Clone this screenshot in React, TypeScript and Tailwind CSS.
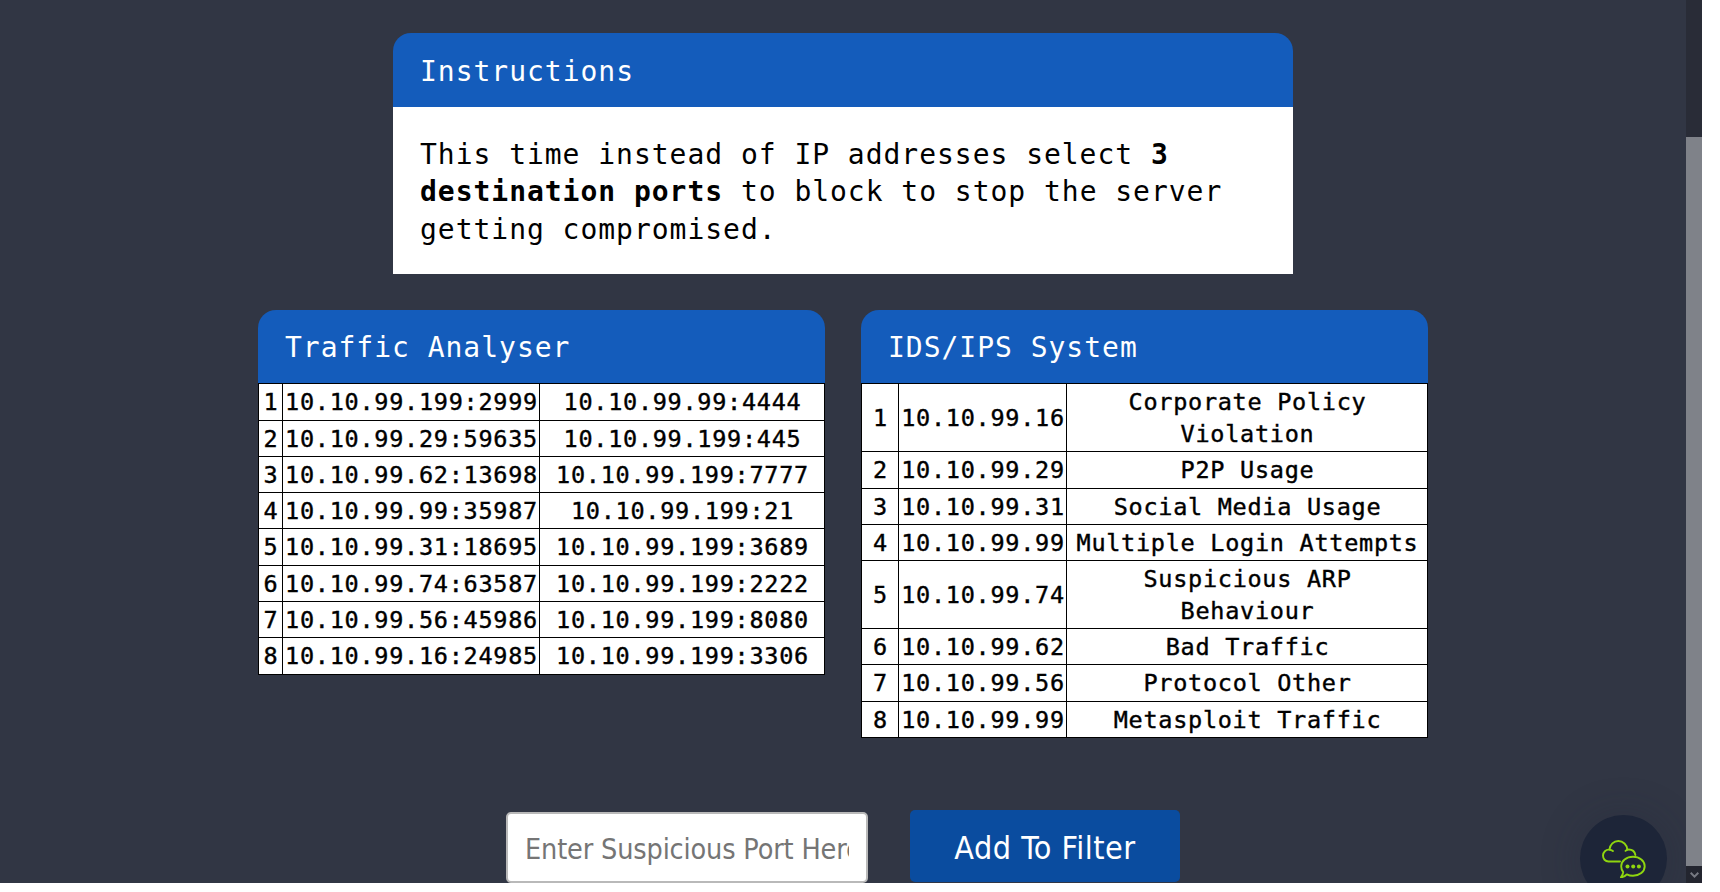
import type { ReactNode } from "react";

const traffic = [
  ["10.10.99.199:2999", "10.10.99.99:4444"],
  ["10.10.99.29:59635", "10.10.99.199:445"],
  ["10.10.99.62:13698", "10.10.99.199:7777"],
  ["10.10.99.99:35987", "10.10.99.199:21"],
  ["10.10.99.31:18695", "10.10.99.199:3689"],
  ["10.10.99.74:63587", "10.10.99.199:2222"],
  ["10.10.99.56:45986", "10.10.99.199:8080"],
  ["10.10.99.16:24985", "10.10.99.199:3306"],
];

const alerts = [
  ["10.10.99.16", "Corporate Policy Violation"],
  ["10.10.99.29", "P2P Usage"],
  ["10.10.99.31", "Social Media Usage"],
  ["10.10.99.99", "Multiple Login Attempts"],
  ["10.10.99.74", "Suspicious ARP Behaviour"],
  ["10.10.99.62", "Bad Traffic"],
  ["10.10.99.56", "Protocol Other"],
  ["10.10.99.99", "Metasploit Traffic"],
];

function CardHeader({ children, className }: { children: ReactNode; className: string }) {
  return (
    <h2
      className={`flex items-center rounded-t-[18px] bg-[#145cbb] pl-[27px] text-[28px] tracking-[0.98px] text-white ${className}`}
    >
      {children}
    </h2>
  );
}

function DataGrid({ rows, className }: { rows: string[][]; className: string }) {
  const cell = "flex items-center justify-center overflow-hidden bg-white pt-0.5";
  return (
    <div
      className={`grid gap-px bg-black p-px text-center text-[23.5px] leading-[31.5px] tracking-[0.72px] text-black [-webkit-text-stroke:0.4px_black] ${className}`}
    >
      {rows.map((row, i) => (
        <div key={i} className="contents">
          <div className={`${cell} pl-px`}>{i + 1}</div>
          <div className={`${cell} pl-px whitespace-nowrap`}>{row[0]}</div>
          <div className={`${cell} pr-1 pl-[5px]`}>{row[1]}</div>
        </div>
      ))}
    </div>
  );
}

function ChatIcon() {
  return (
    <svg width="44" height="38" viewBox="0 0 44 38" fill="none" stroke="#8fd60f" strokeWidth="1.9" strokeLinecap="round" strokeLinejoin="round">
      <path d="M18 21.5H6.5C3.2 21.5 1 18.8 1 15.6c0-3.500 2.900-6.200 6.300-5.900 1.500 0 2.700.5 3.600 1.300" />
      <path d="M7.500 9.300C8 4.500 11.700 1 16.300 1c4.800 0 8.700 3.800 9 8.500" />
      <path d="M23.500 10.800c.8-.8 2-1.300 3.300-1.300 3.500 0 6 2.300 6.600 5.500" />
      <path d="M31 16.800c6.600 0 11.700 4 11.700 9.500s-5.100 9.500-11.700 9.500c-2.300 0-4.400-.5-6.200-1.400-1.500 1.600-3.600 2.700-5.900 2.900 1.300-1.500 2.100-3.200 2.300-5.200-1.300-1.600-2-3.600-2-5.800 0-5.500 5.200-9.500 11.800-9.500Z" />
      <g fill="#8fd60f" stroke="none">
        <circle cx="25.500" cy="26.500" r="2" />
        <circle cx="31.200" cy="26.500" r="2" />
        <circle cx="36.900" cy="26.500" r="2" />
      </g>
    </svg>
  );
}

export default function App() {
  return (
    <div className="h-[892px] w-[1720px] overflow-hidden bg-white">
      <div className="flex h-[883px] w-[1702px] overflow-hidden">
        <main className="relative flex h-[883px] w-[1686px] flex-col items-center overflow-hidden bg-[#313644] pt-[33px] font-['DejaVu_Sans_Mono','Liberation_Mono',monospace]">
          <section className="h-[241px] w-[900px] shrink-0">
            <CardHeader className="h-[74px] pt-1">Instructions</CardHeader>
            <p className="h-[167px] bg-white pt-[28.5px] pl-[27px] text-[28px] leading-[37.5px] tracking-[0.97px] text-black">
              This time instead of IP addresses select <b>3</b>
              <br />
              <b>destination ports</b> to block to stop the server
              <br />
              getting compromised.
            </p>
          </section>

          <div className="mt-9 flex h-[502px] shrink-0 items-start gap-9">
            <section className="w-[567px]">
              <CardHeader className="h-[73px] pt-0.5">Traffic Analyser</CardHeader>
              <DataGrid
                rows={traffic}
                className="grid-cols-[23px_256px_284px] grid-rows-[36px_35px_35px_35px_36px_35px_35px_36px]"
              />
            </section>
            <section className="w-[567px]">
              <CardHeader className="h-[73px] pt-0.5">IDS/IPS System</CardHeader>
              <DataGrid
                rows={alerts}
                className="grid-cols-[36px_167px_360px] grid-rows-[67px_36px_35px_35px_67px_35px_36px_35px]"
              />
            </section>
          </div>

          <form className="flex w-[674px] shrink-0 items-start justify-between font-['DejaVu_Sans_Condensed','DejaVu_Sans',sans-serif] [font-stretch:condensed]">
            <input
              type="text"
              placeholder="Enter Suspicious Port Here"
              className="h-[71px] w-[362px] rounded-[5px] border-2 border-[#b9b9b9] bg-white px-[17px] pt-[3px] text-[28.5px] tracking-[-0.15px] placeholder:text-[#757575]"
            />
            <button type="button" className="-mt-[2px] h-[72px] w-[270px] rounded-[5px] bg-[#0a4c9f] pt-1 text-[32px] tracking-[0.5px] text-white">
              Add To Filter
            </button>
          </form>

          <div className="absolute top-[815px] left-[1580px] flex h-[87px] w-[87px] justify-center rounded-full bg-[#1d2538] pt-[25px] shadow-[0_2px_40px_rgba(29,37,56,0.3)]">
            <ChatIcon />
          </div>
        </main>

        <aside className="flex w-4 flex-col bg-[#292c37]">
          <div className="mt-[137px] h-[729px] bg-[#7f8289]" />
          <div className="flex h-[17px] items-center justify-center bg-[#23252f]">
            <svg width="9" height="6" viewBox="0 0 9 6" fill="none" stroke="#777982" strokeWidth="2">
              <path d="M.7.8 4.500 4.600 8.300.8" />
            </svg>
          </div>
        </aside>
      </div>
    </div>
  );
}
